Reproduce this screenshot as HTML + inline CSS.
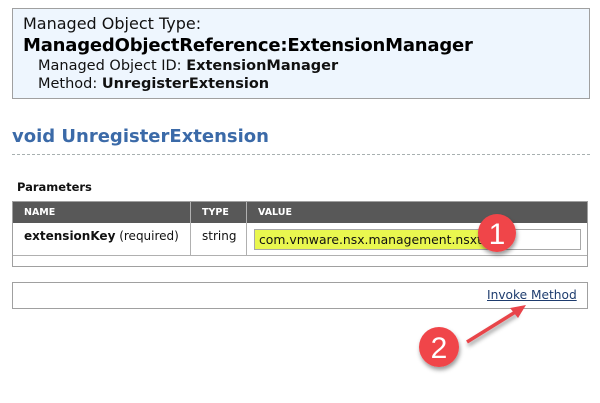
<!DOCTYPE html><html><head><style>
body{margin:0;width:600px;height:403px;background:#fff;font-family:"DejaVu Sans","Liberation Sans",sans-serif;position:relative;overflow:hidden}
.a{position:absolute;white-space:nowrap}
</style></head><body>
<div class="a" style="left:12px;top:8px;width:576px;height:89px;border:1px solid #a0a0a0;background:#eef6fe"></div>
<div class="a" style="left:23px;top:14px;font-size:16px;color:#111">Managed Object Type:</div>
<div class="a" style="left:23px;top:35px;font-size:18px;font-weight:bold;color:#000;letter-spacing:-0.2px">ManagedObjectReference:ExtensionManager</div>
<div class="a" style="left:38px;top:58px;font-size:14.5px;color:#111">Managed Object ID: <b>ExtensionManager</b></div>
<div class="a" style="left:38px;top:76px;font-size:14.5px;color:#111">Method: <b>UnregisterExtension</b></div>
<div class="a" style="left:12px;top:126px;font-size:18px;font-weight:bold;color:#3b6aa8">void UnregisterExtension</div>
<div class="a" style="left:12px;top:154px;width:578px;border-top:1px dashed #a8b0b0"></div>
<div class="a" style="left:17px;top:180px;font-size:11.5px;font-weight:bold;color:#111">Parameters</div>
<div class="a" style="left:12px;top:201px;width:574px;height:64px;border:1px solid #a0a0a0"></div>
<div class="a" style="left:13px;top:202px;width:574px;height:21px;background:#585858"></div>
<div class="a" style="left:24px;top:207px;font-size:9.5px;font-weight:bold;color:#fff">NAME</div>
<div class="a" style="left:202px;top:207px;font-size:9.5px;font-weight:bold;color:#fff">TYPE</div>
<div class="a" style="left:258px;top:207px;font-size:9.5px;font-weight:bold;color:#fff">VALUE</div>
<div class="a" style="left:190px;top:202px;width:1px;height:54px;background:#b0b0b0"></div>
<div class="a" style="left:246px;top:202px;width:1px;height:54px;background:#b0b0b0"></div>
<div class="a" style="left:13px;top:255px;width:574px;height:1px;background:#b0b0b0"></div>
<div class="a" style="left:24px;top:229px;font-size:12px;color:#111"><b>extensionKey</b> (required)</div>
<div class="a" style="left:202px;top:229px;font-size:12px;color:#111">string</div>
<div class="a" style="left:254px;top:229px;width:325px;height:19px;border:1px solid #a8a8a8;background:#fff"></div>
<div class="a" style="left:255px;top:230px;width:232px;height:19px;background:#e9f74f"></div>
<div class="a" style="left:259px;top:232px;font-size:12.4px;color:#111">com.vmware.nsx.management.nsxt</div>
<div class="a" style="left:12px;top:282px;width:574px;height:25px;border:1px solid #a0a0a0"></div>
<div class="a" style="left:487px;top:288px;font-size:12.2px;color:#1e3c6e;text-decoration:underline">Invoke Method</div>
<svg class="a" style="left:0;top:0" width="600" height="403">
<defs><filter id="s" x="-50%" y="-50%" width="200%" height="200%"><feDropShadow dx="1" dy="3" stdDeviation="2" flood-opacity="0.4"/></filter></defs>
<line x1="467" y1="342" x2="517" y2="311" stroke="#e8444a" stroke-width="3.5" filter="url(#s)"/>
<polygon points="526,305 510,308 518,318" fill="#e8444a"/>
<circle cx="497" cy="233" r="19" fill="#f04448" filter="url(#s)"/>
<circle cx="439" cy="347" r="20" fill="#f04448" filter="url(#s)"/>
<text x="497" y="244" text-anchor="middle" font-family="Liberation Sans" font-size="30" fill="#fff">1</text>
<text x="439" y="358" text-anchor="middle" font-family="Liberation Sans" font-size="30" fill="#fff">2</text>
</svg>
</body></html>
